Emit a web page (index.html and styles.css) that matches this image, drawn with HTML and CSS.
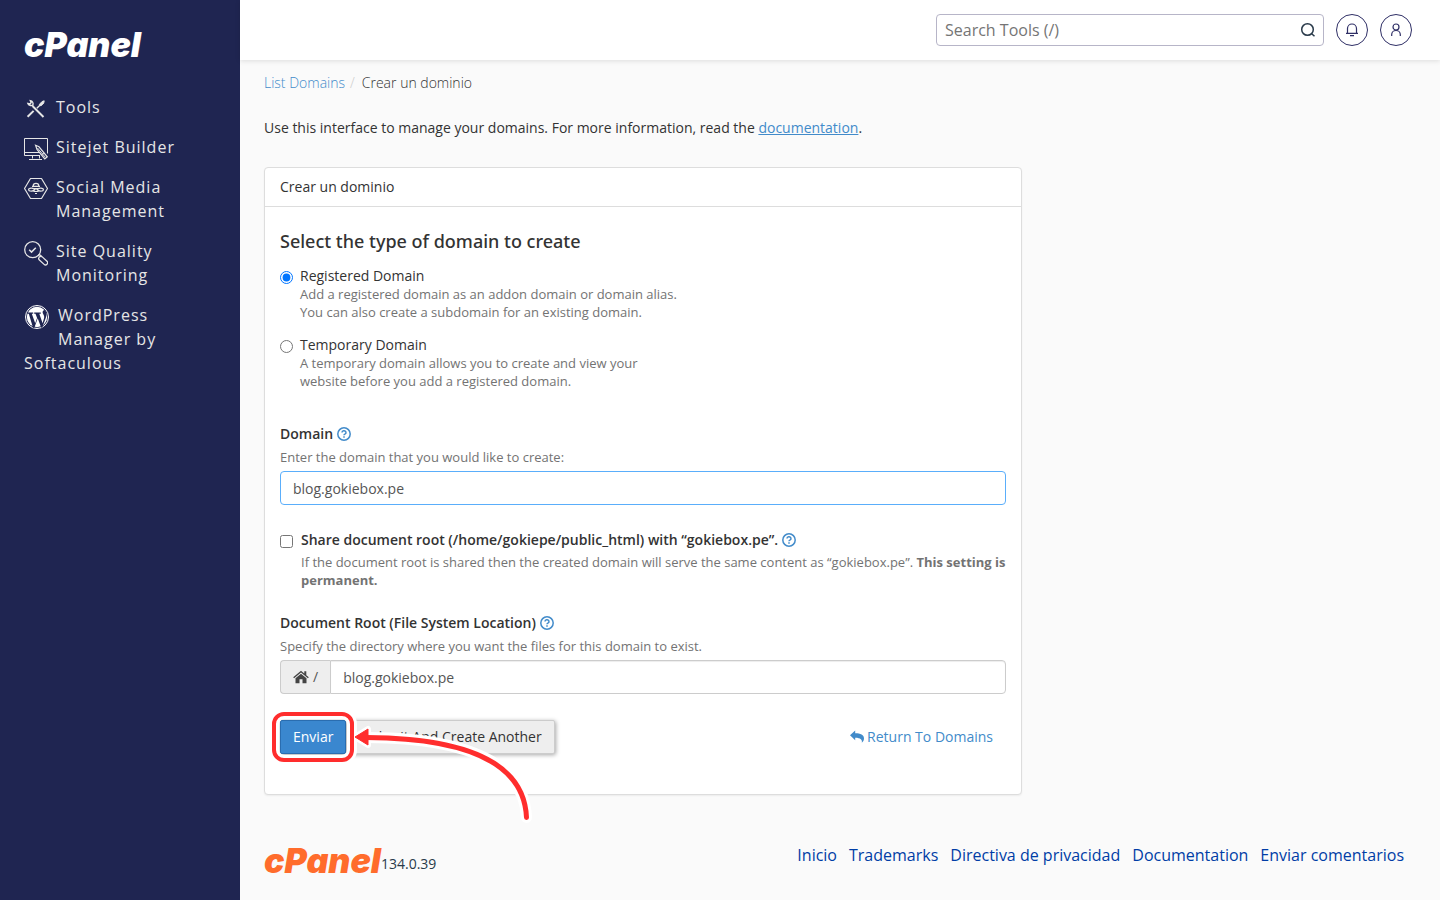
FILE: index.html
```html
<!DOCTYPE html>
<html lang="es">
<head>
    <meta charset="UTF-8">
    <title>cPanel - Crear un dominio</title>
    <link rel="stylesheet" href="styles.css">
</head>
<body>

<aside class="sidebar">
    <a class="brand" href="#">cPanel</a>
    <nav>
        <ul class="menu">
            <li><a href="#">
                <svg class="menu-icon" viewBox="0 0 24 24" fill="none" stroke="currentColor">
                    <path d="M8.5 9 19.5 20" stroke-width="2"/>
                    <path d="M3.6 19.8 9.6 13.9" stroke-width="2"/>
                    <path d="M12.8 11.3 17 7.2" stroke-width="1.4"/>
                    <path d="M15.4 7.4 18 4.6l2.2-.8-.5 2.4-2.9 2.7z" fill="currentColor" stroke-width="1"/>
                    <path d="M6.3 3.6a3.2 3.2 0 0 1 2.5 4.5 3.3 3.3 0 0 1-4.9-1.7l2.2.6 1-1.3z" stroke-width="1.4"/>
                </svg>Tools</a></li>
            <li><a href="#">
                <svg class="menu-icon" viewBox="0 0 24 24" fill="none" stroke="currentColor">
                    <path d="M16 18.5H.5v-17h23v15M1 15.5h14" stroke-width="1"/>
                    <path d="M8.5 18.5v3M15.5 18.5v3M5 22.5h13" stroke-width="1"/>
                    <path d="M11.6 8.3l3.4 1.5 8.3 10-2.5 2-7.8-9.4z" stroke-width="1.2"/>
                    <path d="M13.5 11l7.6 9M18 17.5l2-1.6" stroke-width="1"/>
                </svg>Sitejet Builder</a></li>
            <li><a href="#">
                <svg class="menu-icon" viewBox="0 0 24 24" fill="none" stroke="currentColor">
                    <path d="M6.500 1.500h11l6 10-6 10h-11l-6-10z" stroke-width="1.200" stroke-linejoin="round"/>
                    <path d="M9.200 9a2.800 2.600 0 0 1 5.600 0M8 9.300h8M10 11.500h4" stroke-width="1.200"/>
                    <path d="M11 12.500c-2-1.300-4.500-1.500-6-.8-.8.500-.3 2 1 2.300 2 .4 4-.3 5-1.500zM13 12.500c2-1.300 4.500-1.500 6-.8.8.500.3 2-1 2.300-2 .4-4-.3-5-1.500z" stroke-width="1.200"/>
                    <path d="M9.500 14.500h5M11 16.500h2" stroke-width="1.200"/>
                </svg>Social Media Management</a></li>
            <li><a href="#">
                <svg class="menu-icon" viewBox="0 0 24 24" fill="none" stroke="currentColor">
                    <circle cx="8.700" cy="8.700" r="8" stroke-width="1.300"/>
                    <path d="M5.200 8.800l2.300 2.300 4.300-4.300" stroke-width="1.500"/>
                    <path d="M13.800 15l1.600-1.500 2.500 2.300" stroke-width="1.300"/>
                    <rect x="14" y="17.500" width="10.500" height="4.200" rx="2" transform="rotate(43 19.200 19.500)" stroke-width="1.300"/>
                </svg>Site Quality Monitoring</a></li>
            <li><a href="#">
                <svg class="menu-icon menu-icon-wp" viewBox="0 0 26 26">
                    <circle cx="13" cy="13" r="11.500" fill="none" stroke="#fff"/>
                    <circle cx="13" cy="13" r="10.200" fill="#fff"/>
                    <path d="M3.500 8.500h5.700v1.200H7.800l3.400 9.600 1.900-5.400-1.600-4.200h-1.300V8.500h6.600v1.200h-1.500l3.300 9.600 1.300-4.500c1.200-3.600-1.300-4.700-1.300-6.600 0-1.200.8-2.300 2.200-2.300l1.700 2.500c.4 2.200-.3 4.300-1 6.300l-3.100 8.500-1.200.5-3.500-9.400-3.400 9.700-1.300-.3L4.800 9.700H3z" fill="#1f2551"/>
                </svg>WordPress Manager by Softaculous</a></li>
        </ul>
    </nav>
</aside>

<div class="page">
    <header class="topbar">
        <form class="search">
            <input type="text" placeholder="Search Tools (/)" aria-label="Search Tools">
            <button type="button" aria-label="Search">
                <svg width="16" height="16" viewBox="0 0 16 16" fill="none" stroke="#293a4a" stroke-width="1.500">
                    <circle cx="7.500" cy="7.500" r="5.800"/>
                    <path d="M11.700 11.700l2.800 2.600"/>
                </svg>
            </button>
        </form>
        <button class="round" type="button" aria-label="Notifications">
            <svg width="16" height="16" viewBox="0 0 16 16" fill="none" stroke="currentColor" stroke-width="1.200">
                <path d="M2 11.400h12M3.500 11.400V6.500a4.500 4.500 0 0 1 9 0v4.900M6 13.600h4"/>
            </svg>
        </button>
        <button class="round" type="button" aria-label="Account">
            <svg width="16" height="16" viewBox="0 0 16 16" fill="none" stroke="currentColor" stroke-width="1.200">
                <circle cx="8" cy="5" r="3"/>
                <path d="M3.700 14v-1.500a4.300 4 0 0 1 8.600 0V14"/>
            </svg>
        </button>
    </header>

    <main class="content">
        <ol class="breadcrumb">
            <li><a href="#">List Domains</a></li>
            <li>Crear un dominio</li>
        </ol>
        <p class="intro">Use this interface to manage your domains. For more information, read the <a href="#">documentation</a>.</p>

        <section class="panel">
            <div class="panel-heading">Crear un dominio</div>
            <form class="panel-body">
                <h2>Select the type of domain to create</h2>
                <div class="option">
                    <input type="radio" name="type" id="registered" checked>
                    <div>
                        <label for="registered">Registered Domain</label>
                        <p class="help">Add a registered domain as an addon domain or domain alias.<br>You can also create a subdomain for an existing domain.</p>
                    </div>
                </div>
                <div class="option">
                    <input type="radio" name="type" id="temporary">
                    <div>
                        <label for="temporary">Temporary Domain</label>
                        <p class="help">A temporary domain allows you to create and view your<br>website before you add a registered domain.</p>
                    </div>
                </div>

                <div class="field field-domain">
                    <div class="field-title">
                        <label for="domain">Domain</label>
                        <svg class="question" viewBox="0 0 14 14"><circle cx="7" cy="7" r="6.200"/><path d="M5 5.500a2 1.800 0 1 1 2.900 1.600c-.6.300-.9.500-.9 1.200M7 9.300v1.500"/></svg>
                    </div>
                    <p class="help">Enter the domain that you would like to create:</p>
                    <input class="text-input active" type="text" id="domain" value="blog.gokiebox.pe">
                </div>

                <div class="share">
                    <input type="checkbox" id="share">
                    <div>
                        <div class="field-title">
                            <label for="share">Share document root (/home/gokiepe/public_html) with “gokiebox.pe”.</label>
                            <svg class="question" viewBox="0 0 14 14"><circle cx="7" cy="7" r="6.200"/><path d="M5 5.500a2 1.800 0 1 1 2.900 1.600c-.6.300-.9.500-.9 1.200M7 9.300v1.500"/></svg>
                        </div>
                        <p class="help">If the document root is shared then the created domain will serve the same content as “gokiebox.pe”. <strong>This setting is permanent.</strong></p>
                    </div>
                </div>

                <div class="field">
                    <div class="field-title">
                        <label for="root">Document Root (File System Location)</label>
                        <svg class="question" viewBox="0 0 14 14"><circle cx="7" cy="7" r="6.200"/><path d="M5 5.500a2 1.800 0 1 1 2.900 1.600c-.6.300-.9.500-.9 1.200M7 9.300v1.500"/></svg>
                    </div>
                    <p class="help">Specify the directory where you want the files for this domain to exist.</p>
                    <div class="input-group">
                        <span class="addon">
                            <svg width="16" height="14" viewBox="0 0 16 14" fill="#444">
                                <path d="M8 .8L.2 7.300l.9 1L8 2.600l6.900 5.700.9-1L13.300 5.200V1.200h-2v2.300z"/>
                                <path d="M8 3.800l5.500 4.500v4.900H9.500V9.300h-3v3.900h-4V8.300z"/>
                            </svg>
                            /</span>
                        <input class="text-input" type="text" id="root" value="blog.gokiebox.pe">
                    </div>
                </div>

                <div class="actions">
                    <button class="btn btn-primary" type="button">Enviar</button>
                    <button class="btn" type="button">Submit And Create Another</button>
                    <a class="return" href="#">
                        <svg width="14" height="14" viewBox="0 0 14 14" fill="#428bca">
                            <path d="M0 5.200L5.200.6v2.700c5.300 0 8.800 1.400 8.800 5.300 0 1.800-.9 3.200-2.200 4.200.7-3-1-5-6.600-5.100v2.600z"/>
                        </svg>
                        Return To Domains</a>
                    <svg class="callout" width="272" height="120" viewBox="0 0 272 120" fill="none" aria-hidden="true">
                        <rect x="6" y="6" width="78" height="46" rx="10" stroke="#fff" stroke-width="10"/>
                        <path d="M258.500 109.500C256 50 188 30 100 29.500" stroke="#fff" stroke-width="11" stroke-linecap="round"/>
                        <path d="M87 29l13-8v16z" fill="#fff" stroke="#fff" stroke-width="6" stroke-linejoin="round"/>
                        <rect x="6" y="6" width="78" height="46" rx="10" stroke="#ff2d2d" stroke-width="4"/>
                        <path d="M258.500 109.500C256 50 188 30 98 29.500" stroke="#ff2d2d" stroke-width="5" stroke-linecap="round"/>
                        <path d="M87 29l13-8v16z" fill="#ff2d2d" stroke="#ff2d2d" stroke-linejoin="round"/>
                    </svg>
                </div>
            </form>
        </section>
    </main>

    <footer class="footer">
        <div class="version"><span class="brand brand-orange">cPanel</span>134.0.39</div>
        <ul class="footer-links">
            <li><a href="#">Inicio</a></li>
            <li><a href="#">Trademarks</a></li>
            <li><a href="#">Directiva de privacidad</a></li>
            <li><a href="#">Documentation</a></li>
            <li><a href="#">Enviar comentarios</a></li>
        </ul>
    </footer>
</div>

</body>
</html>
```
FILE: styles.css
```css
*{
    margin: 0;
    padding: 0;
    box-sizing: border-box;
}
body{
    display: flex;
    min-height: 100vh;
    background: #fafafa;
    color: #333;
    font: 14px/20px "Open Sans", sans-serif;
}
ul, ol{
    list-style: none;
}
a{
    color: #428bca;
    text-decoration: none;
}
button, input{
    font: inherit;
}

/* sidebar */
.sidebar{
    flex: none;
    width: 240px;
    padding: 25px 24px;
    background: #1f2551;
}
.brand{
    display: block;
    color: #fff;
    font: italic 900 34px/40px Inter, sans-serif;
}
.brand-orange{
    color: #ff6c2c;
    line-height: 26px;
}
.menu{
    margin-top: 22px;
}
.menu a{
    display: block;
    padding: 8px 0;
    color: #e6e6e6;
    font-size: 16px;
    line-height: 24px;
    letter-spacing: 1px;
}
.menu-icon{
    float: left;
    width: 24px;
    height: 26px;
    margin: 1px 8px 0 0;
}
.menu-icon-wp{
    width: 26px;
    height: 26px;
}

/* top bar */
.page{
    flex: 1;
    min-width: 0;
    display: flex;
    flex-direction: column;
}
.topbar{
    display: flex;
    justify-content: flex-end;
    align-items: center;
    gap: 12px;
    height: 60px;
    padding: 0 28px;
    background: #fff;
    box-shadow: 0 1px 5px rgba(0,0,0,.12);
}
.search{
    display: flex;
    width: 388px;
    height: 32px;
    border: 1px solid #b7b5c8;
    border-radius: 4px;
}
.search input{
    flex: 1;
    min-width: 0;
    padding: 0 8px;
    border: 0;
    background: none;
    outline: 0;
    font-size: 16px;
}
.search button{
    display: flex;
    align-items: center;
    padding: 0 7px;
    border: 0;
    background: none;
}
.round{
    display: flex;
    align-items: center;
    justify-content: center;
    width: 32px;
    height: 32px;
    border: 1px solid #2f2f66;
    border-radius: 50%;
    background: #fff;
    color: #2f2f66;
}

/* content */
.content{
    padding: 13px 24px 0;
}
.breadcrumb{
    display: flex;
    font-weight: 300;
}
.breadcrumb li + li:before{
    content: "/";
    padding: 0 7px 0 5px;
    color: #ccc;
}
.intro{
    margin: 25px 0 29px;
}
.intro a{
    text-decoration: underline;
}
.panel{
    max-width: 758px;
    border: 1px solid #ddd;
    border-radius: 4px;
    background: #fff;
    box-shadow: 0 1px 2px rgba(0,0,0,.06);
}
.panel-heading{
    padding: 9px 15px;
    border-bottom: 1px solid #ddd;
}
.panel-body{
    padding: 24px 15px 40px;
}
h2{
    margin-bottom: 15px;
    font: 500 18px/20px "Noto Sans", sans-serif;
}
.help{
    color: #737373;
    font-size: 13px;
    line-height: 18px;
}
.option{
    display: flex;
    gap: 7px;
    margin-bottom: 14px;
}
.option label{
    display: block;
    line-height: 19px;
}
.option input, .share input{
    flex: none;
    width: 13px;
    height: 13px;
    margin-top: 5px;
}
.field-title{
    display: flex;
    align-items: center;
    gap: 4px;
    margin-bottom: 4px;
    font-weight: 600;
}
.question{
    width: 14px;
    height: 14px;
    fill: none;
    stroke: #428bca;
    stroke-width: 1.5;
}
.field-domain{
    margin-top: 34px;
}
.text-input{
    display: block;
    width: 100%;
    height: 34px;
    padding: 0 12px;
    border: 1px solid #ccc;
    border-radius: 4px;
    background: #fff;
    box-shadow: inset 0 1px 1px rgba(0,0,0,.075);
    color: #555;
}
.field .help{
    margin-bottom: 5px;
}
.text-input.active{
    border-color: #5aaefb;
    box-shadow: none;
}
.share{
    display: flex;
    gap: 8px;
    margin: 25px 0 24px;
}
.share .field-title{
    margin-bottom: 3px;
}
.input-group{
    display: flex;
}
.addon{
    display: flex;
    align-items: center;
    gap: 4px;
    padding: 0 12px;
    border: 1px solid #ccc;
    border-right: 0;
    border-radius: 4px 0 0 4px;
    background: #eee;
    color: #555;
}
.input-group .text-input{
    flex: 1;
    border-radius: 0 4px 4px 0;
}
.actions{
    position: relative;
    display: flex;
    gap: 3px;
    margin-top: 26px;
}
.btn{
    height: 34px;
    padding: 0 12px;
    border: 1px solid #ccc;
    border-radius: 2px;
    background: #eee;
    box-shadow: 1px 1px 4px rgba(0,0,0,.35);
    color: #333;
}
.btn-primary{
    border-color: #2a6db0;
    background: #3a87cf;
    color: #fff;
}
.return{
    display: flex;
    align-items: center;
    gap: 3px;
    margin-left: auto;
    padding: 0 13px;
}
/* red marker over the submit button */
.callout{
    position: absolute;
    left: -12px;
    top: -12px;
    pointer-events: none;
}

/* footer */
.footer{
    display: flex;
    justify-content: space-between;
    padding: 48px 36px 0 24px;
}
.version{
    display: flex;
    align-items: flex-end;
    padding-top: 5px;
    color: #293a4a;
}
.footer-links{
    display: flex;
    gap: 12px;
    font-size: 16px;
    line-height: 24px;
}
.footer-links a{
    color: #003da6;
}
```
